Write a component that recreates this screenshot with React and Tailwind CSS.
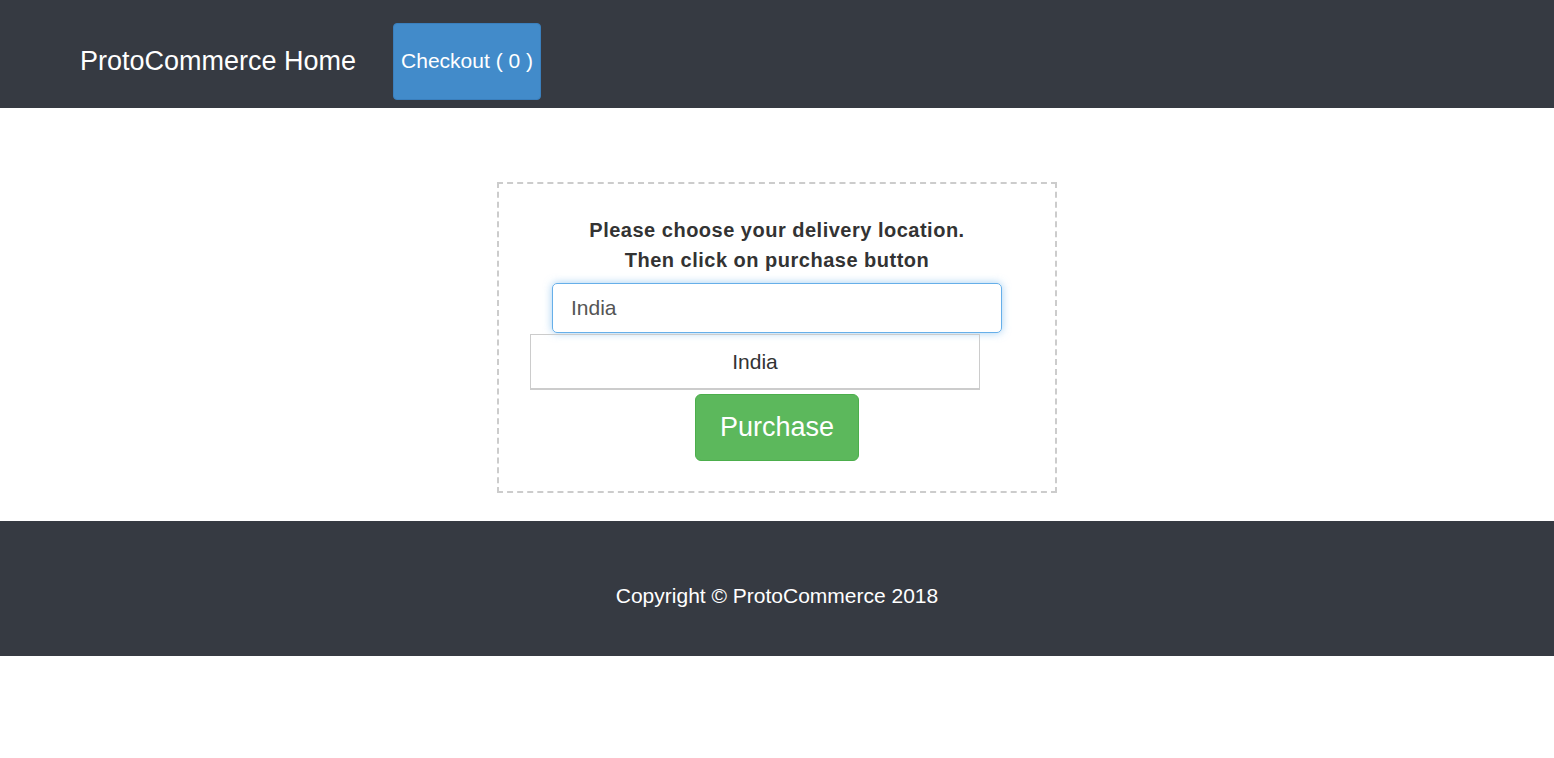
import { useState } from "react";

const FONT = { fontFamily: '"Liberation Sans", Arial, sans-serif' };

const Header = () => (
  <nav className="flex h-[108px] items-center bg-[#363a42] pt-[14px] pl-[80px]">
    <span className="text-[27px] leading-none text-white">ProtoCommerce Home</span>
    <button className="ml-[37px] h-[77px] rounded-[4px] border border-[#3a7fbd] bg-[#428bca] px-[7px] text-[21px] text-white">
      Checkout ( 0 )
    </button>
  </nav>
);

const Footer = () => (
  <footer className="flex h-[135px] items-center justify-center bg-[#363a42] pt-[15px]">
    <p className="text-[21px] text-white">Copyright © ProtoCommerce 2018</p>
  </footer>
);

export default function App() {
  const [country, setCountry] = useState("India");

  return (
    <div style={FONT} className="min-h-[758px] bg-white">
      <Header />

      {/* Delivery location box */}
      <div className="flex justify-center pt-[74px] pb-[28px]">
        <div className="flex w-[560px] flex-col items-center border-2 border-dashed border-[#cccccc] pt-[31px] pb-[30px]">
          <h4 className="text-center text-[20px] leading-[30px] font-bold tracking-[0.5px] text-[#333]">
            Please choose your delivery location.
            <br />
            Then click on purchase button
          </h4>
          <input
            value={country}
            onChange={(e) => setCountry(e.target.value)}
            className="mt-[8px] h-[50px] w-[450px] rounded-[5px] border border-[#66afe9] px-[18px] text-[21px] text-[#555] shadow-[0_0_8px_rgba(102,175,233,0.6)] outline-none"
          />
          <div className="mt-[1px] mr-[44px] flex h-[56px] w-[450px] items-center justify-center border border-b-2 border-[#cccccc] text-[21px] text-[#333]">
            India
          </div>
          <button className="mt-[4px] h-[67px] w-[164px] rounded-[6px] border border-[#4cae4c] bg-[#5cb85c] text-[27px] text-white">
            Purchase
          </button>
        </div>
      </div>

      <Footer />
    </div>
  );
}
